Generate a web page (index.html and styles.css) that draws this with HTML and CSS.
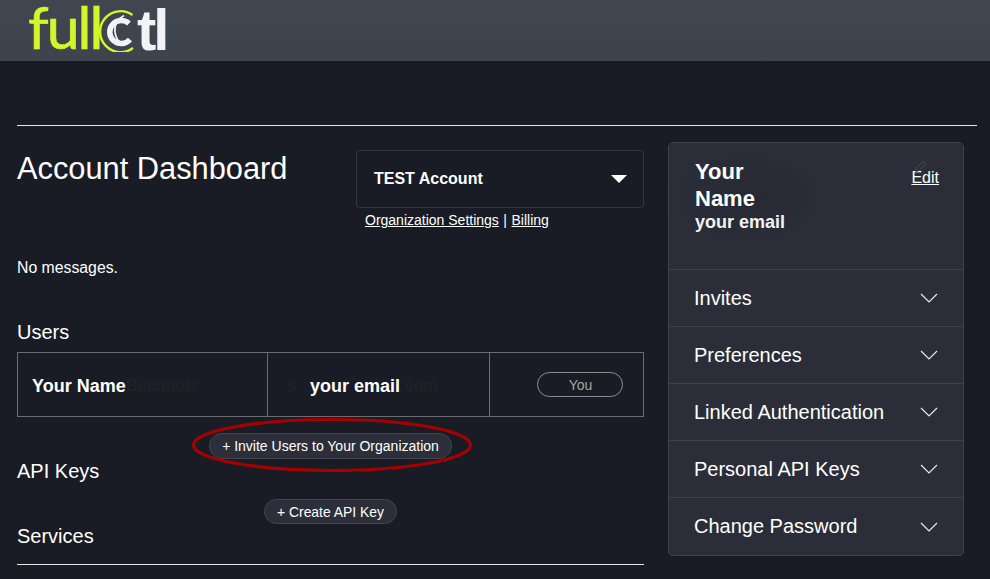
FILE: index.html
```html
<!DOCTYPE html>
<html lang="en">
<head>
  <meta charset="UTF-8">
  <title>Account Dashboard</title>
  <link rel="stylesheet" href="styles.css">
</head>
<body>
  <header class="topbar">
    <div class="logo">
      <span class="logo-full">full</span>
      <svg class="logo-c" width="44" height="44" viewBox="0 0 44 44" fill="none">
        <path d="M36.5 7 A20.5 20.5 0 1 0 37 40" stroke="#d4f52c" stroke-width="2.4"/>
        <path d="M28 7.5 A16.5 16.5 0 0 0 29 37.5" stroke="#f1f3f4" stroke-width="1.8"/>
        <path d="M33 15.5 A11.5 11.5 0 1 0 34 31.5" stroke="#f1f3f4" stroke-width="5.5"/>
      </svg>
      <span class="logo-tl">tl</span>
    </div>
  </header>

  <div class="page">
    <div class="columns">
      <main class="main">
        <div class="title-row">
          <h1>Account Dashboard</h1>
          <div class="org">
            <div class="org-select">
              <span>TEST Account</span>
              <i class="caret"></i>
            </div>
            <div class="org-links">
              <a href="#">Organization Settings</a><span class="sep">|</span><a href="#">Billing</a>
            </div>
          </div>
        </div>

        <p class="messages">No messages.</p>

        <h2 class="users-title">Users</h2>
        <div class="user-row">
          <div class="cell cell-name"><b>Your Name</b><span class="ghost">Buchholz</span></div>
          <div class="cell cell-email"><span class="ghost ghost-left">s</span><b>your email</b><span class="ghost">.com</span></div>
          <div class="cell cell-you"><span class="you">You</span></div>
        </div>

        <div class="invite-wrap">
          <button class="pill invite">+ Invite Users to Your Organization</button>
          <svg class="circled" width="282" height="56" viewBox="0 0 282 56" fill="none">
            <ellipse cx="141" cy="28" rx="138.5" ry="25.5" stroke="#a80000" stroke-width="3"/>
          </svg>
        </div>

        <h2 class="api-title">API Keys</h2>
        <div class="create-wrap">
          <button class="pill create">+ Create API Key</button>
        </div>
        <h2 class="services-title">Services</h2>
      </main>

      <aside class="panel">
        <div class="profile">
          <div class="who">
            <div class="who-name">Your<br>Name</div>
            <div class="who-email">your email</div>
          </div>
          <a class="edit" href="#">
            <svg class="pencil" width="14" height="14" viewBox="0 0 14 14" fill="none" stroke="#4a4e57">
              <path d="M2 9.5 L9.5 2 L12 4.5 L4.5 12 L1.5 12.5 Z"/>
            </svg>
            Edit
          </a>
        </div>
        <div class="acc-row">Invites<svg class="chev" width="18" height="10" viewBox="0 0 18 10" fill="none"><path d="M1 1 L9 9 L17 1"/></svg></div>
        <div class="acc-row">Preferences<svg class="chev" width="18" height="10" viewBox="0 0 18 10" fill="none"><path d="M1 1 L9 9 L17 1"/></svg></div>
        <div class="acc-row">Linked Authentication<svg class="chev" width="18" height="10" viewBox="0 0 18 10" fill="none"><path d="M1 1 L9 9 L17 1"/></svg></div>
        <div class="acc-row">Personal API Keys<svg class="chev" width="18" height="10" viewBox="0 0 18 10" fill="none"><path d="M1 1 L9 9 L17 1"/></svg></div>
        <div class="acc-row">Change Password<svg class="chev" width="18" height="10" viewBox="0 0 18 10" fill="none"><path d="M1 1 L9 9 L17 1"/></svg></div>
      </aside>
    </div>
    <div class="bottom-line"></div>
  </div>
</body>
</html>
```

FILE: styles.css
```css
* {
  box-sizing: border-box;
}

html, body {
  margin: 0;
  height: 100%;
  background: #191c24;
  color: #fff;
  font-family: "Liberation Sans", Arial, sans-serif;
  overflow: hidden;
}

.topbar {
  height: 61px;
  padding-left: 28px;
  background: linear-gradient(#3f464f, #3d444d);
}

.logo {
  display: flex;
  align-items: flex-start;
  height: 61px;
}

.logo-full {
  width: 68px;
  margin-top: 5px;
  font-family: "Lato", sans-serif;
  font-size: 59px;
  line-height: 44px;
  letter-spacing: -2px;
  color: #d4f52c;
  -webkit-text-stroke: 0.6px #d4f52c;
}

.logo-c {
  margin-top: 8px;
  flex: none;
}

.logo-tl {
  margin: 8px 0 0 -3px;
  font-size: 58px;
  font-weight: 700;
  line-height: 44px;
  letter-spacing: -3px;
  color: #f1f3f4;
}

.page {
  padding: 64px 13px 0 17px;
}

.columns {
  display: grid;
  grid-template-columns: 627px 296px;
  gap: 24px;
  padding-top: 16px;
  border-top: 1px solid #e4e5e7;
}

.title-row {
  display: flex;
  justify-content: space-between;
}

h1 {
  margin: 10px 0 0;
  font-size: 30.8px;
  font-weight: 400;
  line-height: 34px;
}

.org {
  width: 288px;
  padding-top: 8px;
}

.org-select {
  display: flex;
  align-items: center;
  justify-content: space-between;
  height: 58px;
  padding: 0 16px 0 17px;
  border: 1px solid #33363d;
  border-radius: 4px;
  font-size: 16px;
  font-weight: 700;
}

.caret {
  width: 0;
  height: 0;
  border-left: 8px solid transparent;
  border-right: 8px solid transparent;
  border-top: 8px solid #fff;
}

.org-links {
  margin-top: 4px;
  padding-left: 9px;
  font-size: 14px;
  line-height: 16px;
}

.org-links a, .edit {
  color: #fff;
  text-decoration: underline;
}

.sep {
  margin: 0 4.5px;
}

.messages {
  margin: 31px 0 0;
  font-size: 15.8px;
  line-height: 18px;
}

h2 {
  margin: 0;
  font-size: 20px;
  font-weight: 400;
  line-height: 24px;
}

.users-title {
  margin-top: 43px;
}

.user-row {
  display: grid;
  grid-template-columns: 249px 222px 1fr;
  height: 65px;
  margin-top: 8px;
  border: 1px solid #6a6c72;
}

.cell {
  display: flex;
  align-items: center;
  padding-top: 3px;
  font-size: 18px;
}

.cell + .cell {
  border-left: 1px solid #6a6c72;
}

.cell-name {
  padding-left: 14px;
}

.cell-email {
  padding-left: 20px;
}

.ghost {
  color: #1f2228;
  font-size: 16px;
  font-weight: 700;
  filter: blur(0.6px);
}

.ghost-left {
  width: 22px;
}

.cell-you {
  justify-content: flex-end;
  padding: 0 20px 0 0;
}

.you {
  width: 86px;
  height: 25px;
  padding-left: 1px;
  border: 1px solid #8a8c90;
  border-radius: 13px;
  color: #a4a6aa;
  font-size: 14px;
  line-height: 24px;
  text-align: center;
}

.pill {
  height: 26px;
  padding: 0 12px;
  border: 1px solid #42454d;
  border-radius: 13px;
  background: #2c2f3a;
  color: #fff;
  font-family: inherit;
  font-size: 14px;
}

.invite-wrap {
  position: relative;
  margin-top: 16px;
  margin-left: 192px;
  width: 243px;
  height: 26px;
}

.invite {
  width: 243px;
  padding: 0;
}

.circled {
  position: absolute;
  left: -18px;
  top: -16px;
}

.create {
  display: block;
  width: 133px;
  height: 25px;
  padding: 0;
  font-size: 13.9px;
}

.create-wrap {
  margin-top: 16px;
  padding-left: 247px;
}

.panel {
  height: 414px;
  border: 1px solid #3e424b;
  border-radius: 5px;
  background: #2b2e39;
}

.profile {
  display: flex;
  justify-content: space-between;
  height: 127px;
  padding: 15px 24px 0 26px;
  border-bottom: 1px solid #3e424b;
  background: radial-gradient(ellipse 90px 55px at 80px 55px, #272a33, #2b2e39);
}

.who-name {
  font-size: 22px;
  font-weight: 700;
  line-height: 27px;
}

.who-email {
  font-size: 18px;
  font-weight: 700;
  line-height: 20px;
  color: #f2f2f4;
}

.edit {
  position: relative;
  height: 20px;
  margin-top: 11px;
  font-size: 16px;
}

.pencil {
  position: absolute;
  left: 3px;
  top: -10px;
}

.acc-row {
  display: flex;
  align-items: center;
  justify-content: space-between;
  height: 57px;
  padding: 0 25px;
  border-bottom: 1px solid #3e424b;
  font-size: 20px;
}

.acc-row:last-child {
  border-bottom: 0;
}

.chev {
  stroke: #e8e9eb;
  stroke-width: 1.2;
}

.bottom-line {
  margin-top: 8px;
  width: 627px;
  border-top: 1px solid #e4e5e7;
}
```
